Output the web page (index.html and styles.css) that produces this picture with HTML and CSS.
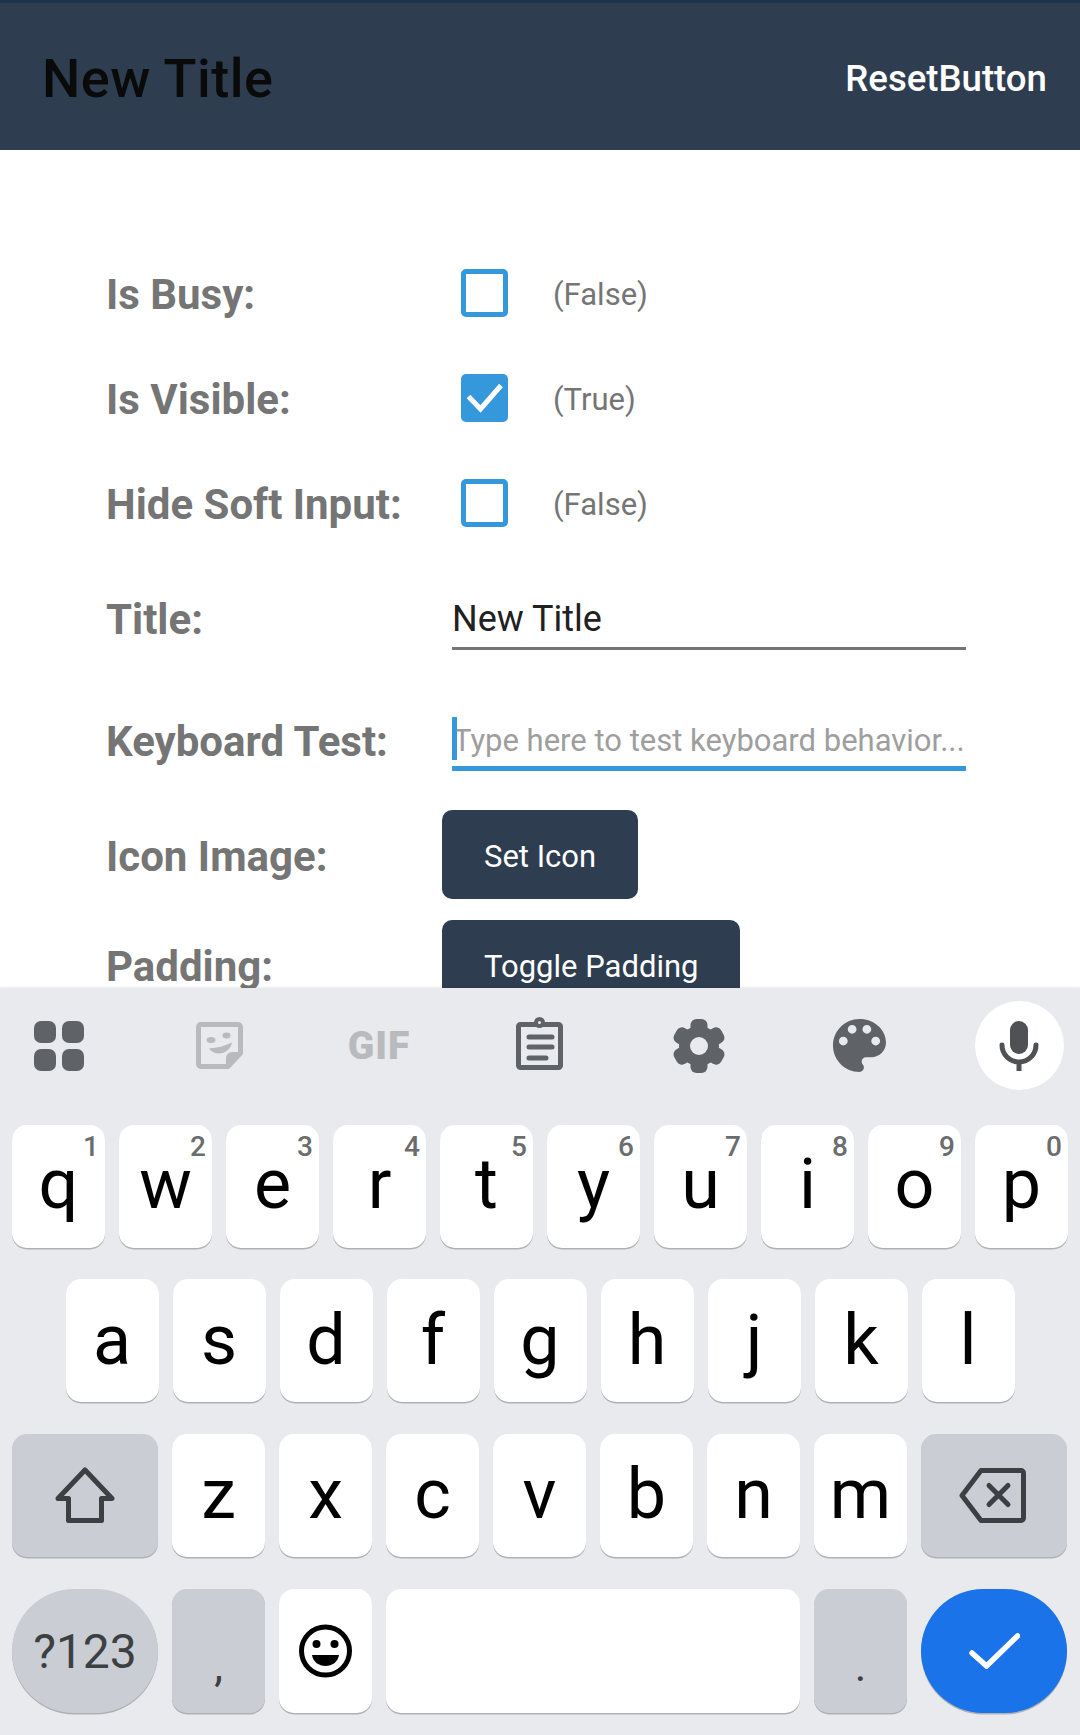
FILE: index.html
```html
<!DOCTYPE html>
<html lang="en">
<head>
<meta charset="utf-8">
<title>New Title</title>
<link rel="stylesheet" href="styles.css">
</head>
<body>
<div class="screen">
  <header class="header">
    <div class="header-title">New Title</div>
    <div class="header-action">ResetButton</div>
  </header>
  <main class="form">
    <div class="row row-check">
      <div class="label">Is Busy:</div>
      <div class="check"></div>
      <div class="value">(False)</div>
    </div>
    <div class="row row-check">
      <div class="label">Is Visible:</div>
      <div class="check check-on"><svg width="47" height="48" viewBox="0 0 47 48"><path d="M7.5 22.5L19.5 35L40 11.5" fill="none" stroke="#fff" stroke-width="5"/></svg></div>
      <div class="value">(True)</div>
    </div>
    <div class="row row-check">
      <div class="label">Hide Soft Input:</div>
      <div class="check"></div>
      <div class="value">(False)</div>
    </div>
    <div class="row row-title">
      <div class="label">Title:</div>
      <div class="field field-title">New Title</div>
    </div>
    <div class="row row-keyboard">
      <div class="label">Keyboard Test:</div>
      <div class="field field-focus"><span class="caret"></span>Type here to test keyboard behavior...</div>
    </div>
    <div class="row row-button row-icon">
      <div class="label label-low">Icon Image:</div>
      <div class="button">Set Icon</div>
    </div>
    <div class="row row-button row-padding">
      <div class="label label-low">Padding:</div>
      <div class="button">Toggle Padding</div>
    </div>
  </main>
  <section class="keyboard">
    <div class="toolbar">
      <div class="tool"><svg width="50" height="50" viewBox="0 0 50 50" fill="#5f6368"><rect x="0" y="0" width="22" height="22" rx="7"/><rect x="28" y="0" width="22" height="22" rx="7"/><rect x="0" y="28" width="22" height="22" rx="7"/><rect x="28" y="28" width="22" height="22" rx="7"/></svg></div>
      <div class="tool"><svg class="icon-sticker" width="47" height="48" viewBox="0 0 47 48"><path d="M2.5 5a2.500 2.500 0 0 1 2.500-2.500H42a2.500 2.500 0 0 1 2.500 2.500V31L32 44.500H5a2.500 2.500 0 0 1-2.500-2.500Z" fill="none" stroke="#b9babd" stroke-width="5" stroke-linejoin="round"/><path d="M46 30H36a6 6 0 0 0-6 6V46Z" fill="#b9babd"/><ellipse cx="15" cy="18" rx="4.500" ry="3" fill="#b9babd"/><ellipse cx="30.500" cy="13.500" rx="4" ry="3" fill="#b9babd"/><path d="M13 26.500C21 26 29 24 36 20.500C35 27 29 31.500 23 31.500C19 31.500 15.500 30 13 26.500Z" fill="#b9babd"/></svg></div>
      <div class="tool tool-gif">GIF</div>
      <div class="tool"><svg class="icon-clipboard" width="47" height="53" viewBox="0 0 47 53" fill="none" stroke="#5f6368" stroke-width="5" stroke-linecap="round"><rect x="2.500" y="7.500" width="42" height="43" rx="2"/><path d="M13 20H36M13 30H36M13 41H30"/><circle cx="23.500" cy="5.500" r="3.500" fill="#e8eaed" stroke-width="4"/></svg></div>
      <div class="tool"><svg width="52" height="54" viewBox="0 0 52 54" fill="#5f6368"><g transform="translate(26 27)"><circle r="20"/><rect x="-8.500" y="-27" width="17" height="54" rx="6"/><rect x="-8.500" y="-27" width="17" height="54" rx="6" transform="rotate(60)"/><rect x="-8.500" y="-27" width="17" height="54" rx="6" transform="rotate(120)"/><circle r="9" fill="#e8eaed"/></g></svg></div>
      <div class="tool"><svg width="53" height="53" viewBox="3 3 18 18" fill="#5f6368"><path d="M12 3c-4.970 0-9 4.030-9 9s4.030 9 9 9c.830 0 1.500-.670 1.500-1.500 0-.390-.150-.740-.390-1.010-.230-.260-.380-.610-.380-.990 0-.830.670-1.500 1.500-1.500H16c2.760 0 5-2.240 5-5 0-4.420-4.030-8-9-8zm-5.500 9c-.830 0-1.500-.670-1.500-1.500S5.670 9 6.500 9 8 9.670 8 10.500 7.330 12 6.500 12zm3-4C8.670 8 8 7.330 8 6.500S8.670 5 9.500 5s1.500.670 1.500 1.500S10.330 8 9.500 8zm5 0c-.830 0-1.500-.670-1.500-1.500S13.670 5 14.500 5s1.500.670 1.500 1.500S15.330 8 14.500 8zm3 4c-.830 0-1.500-.670-1.500-1.500S16.670 9 17.500 9s1.500.670 1.500 1.500-.670 1.500-1.500 1.500z"/></svg></div>
      <div class="tool tool-mic"><svg width="40" height="50" viewBox="0 0 40 50"><rect x="11" y="0" width="18" height="33" rx="9" fill="#4f5154"/><path d="M3 24a17 17 0 0 0 34 0M20 41V50" fill="none" stroke="#4f5154" stroke-width="5" stroke-linecap="round"/></svg></div>
    </div>
    <div class="keys">
      <div class="key-row key-row-top">
        <div class="key">q<span class="hint">1</span></div>
        <div class="key">w<span class="hint">2</span></div>
        <div class="key">e<span class="hint">3</span></div>
        <div class="key">r<span class="hint">4</span></div>
        <div class="key">t<span class="hint">5</span></div>
        <div class="key">y<span class="hint">6</span></div>
        <div class="key">u<span class="hint">7</span></div>
        <div class="key">i<span class="hint">8</span></div>
        <div class="key">o<span class="hint">9</span></div>
        <div class="key">p<span class="hint">0</span></div>
      </div>
      <div class="key-row key-row-home">
        <div class="key">a</div>
        <div class="key">s</div>
        <div class="key">d</div>
        <div class="key">f</div>
        <div class="key">g</div>
        <div class="key">h</div>
        <div class="key">j</div>
        <div class="key">k</div>
        <div class="key">l</div>
      </div>
      <div class="key-row">
        <div class="key key-wide key-mod"><svg width="60" height="56" viewBox="0 0 60 56"><path d="M30 3L57 31.500H46.500V53.500H13.500V31.500H3Z" fill="none" stroke="#3c4043" stroke-width="5" stroke-linejoin="round"/></svg></div>
        <div class="key">z</div>
        <div class="key">x</div>
        <div class="key">c</div>
        <div class="key">v</div>
        <div class="key">b</div>
        <div class="key">n</div>
        <div class="key">m</div>
        <div class="key key-wide key-mod key-delete"><svg width="67" height="55" viewBox="0 0 67 55" fill="none" stroke="#3c4043" stroke-width="5" stroke-linejoin="round" stroke-linecap="round"><path d="M22 2.500H62a2.500 2.500 0 0 1 2.500 2.500V50a2.500 2.500 0 0 1-2.500 2.500H22L3 27.500Z"/><path d="M30 17.500L49 36.500M49 17.500L30 36.500"/></svg></div>
      </div>
      <div class="key-row key-row-bottom">
        <div class="key key-wide key-mod key-pill key-symbols">?123</div>
        <div class="key key-mod key-punct">,</div>
        <div class="key key-icon"><svg width="53" height="54" viewBox="0 0 53 54"><circle cx="26.500" cy="27" r="24" fill="none" stroke="#000" stroke-width="5"/><circle cx="17.500" cy="20" r="4"/><circle cx="35.500" cy="20" r="4"/><path d="M13 31H40C39 38 33 42 26.500 42C20 42 14 38 13 31Z"/></svg></div>
        <div class="key key-space"></div>
        <div class="key key-mod key-punct">.</div>
        <div class="key key-wide key-pill key-enter"><svg width="51" height="36" viewBox="0 0 51 36"><path d="M3 20L17.500 33L48.500 3" fill="none" stroke="#fff" stroke-width="5.500" stroke-linecap="round"/></svg></div>
      </div>
    </div>
  </section>
</div>
</body>
</html>
```
FILE: styles.css
```css
* { box-sizing: border-box; }
html, body { margin: 0; padding: 0; }
body { font-family: Roboto, "Liberation Sans", sans-serif; background: #fff; }
.screen { width: 1080px; height: 1735px; display: flex; flex-direction: column; overflow: hidden; }

.header { flex: 0 0 150px; background: #2e3e50; border-top: 3px solid #1d3349; display: flex; align-items: center; justify-content: space-between; padding: 4px 33px 0 42px; }
.header-title { font-size: 54px; font-weight: 500; color: #0a0a0a; line-height: 60px; letter-spacing: 0.5px; }
.header-action { font-size: 36.6px; font-weight: 500; color: #fff; line-height: 44px; }

.form { flex: 1 1 0; min-height: 0; overflow: hidden; padding: 90.5px 0 0 106px; }
.row { display: flex; align-items: center; }
.row-check { height: 105px; }
.label { flex: 0 0 336px; font-size: 42px; font-weight: 700; color: #757575; line-height: 50px; white-space: nowrap; }
.row-check .label { margin-top: 4px; }
.row-keyboard .label { margin-top: 2px; }
.label-low { margin-top: 5px; }
.check { width: 47px; height: 48px; border: 5px solid #3498db; border-radius: 5px; margin: 0 0 0 19px; flex: none; }
.check-on { background: #3498db; border: 0; }
.check-on svg { display: block; }
.value { margin: 4px 0 0 45px; font-size: 31px; color: #757575; line-height: 40px; }

.row-title { height: 60px; margin-top: 34px; }
.field { position: relative; width: 514px; margin-left: 10px; display: flex; align-items: flex-end; white-space: nowrap; }
.field-title { height: 60px; border-bottom: 3px solid #757575; padding: 0 0 7px; font-size: 36px; line-height: 42px; color: #212121; }
.row-keyboard { height: 59px; margin-top: 62px; }
.field-focus { height: 59px; border-bottom: 5px solid #3498db; padding: 0 0 5px 1px; font-size: 31px; line-height: 40px; color: #9e9e9e; }
.caret { position: absolute; left: 0; top: 5px; width: 5px; height: 43px; background: #3498db; }

.row-button { height: 89px; flex: none; }
.row-icon { margin-top: 39px; }
.row-padding { margin-top: 21px; }
.button { height: 89px; padding: 5px 42px 0; border-radius: 10px; background: #2e3e50; color: #fff; font-size: 31px; line-height: 40px; display: flex; align-items: center; }

.keyboard { flex: 0 0 747px; background: #e8eaed; box-shadow: 0 -1px 2px rgba(0,0,0,.08); position: relative; padding-top: 13px; }
.toolbar { height: 89px; display: flex; gap: 71px; padding-left: 14.5px; }
.tool { flex: 0 0 89px; height: 89px; display: flex; align-items: center; justify-content: center; }
.tool-gif { font-size: 39px; font-weight: 900; color: #b9babd; letter-spacing: 1px; }
.tool-mic { background: #fff; border-radius: 50%; }
.icon-clipboard { margin-bottom: 4px; }
.keys { padding: 35px 12px 0; display: flex; flex-direction: column; gap: 31.49px; }
.key-row { display: flex; gap: 14px; height: 123px; }
.key-row-home { padding-left: 53.5px; }
.key-row-bottom { margin-top: 0.6px; height: 124px; }
.key { position: relative; flex: 0 0 93px; height: 123px; padding-bottom: 2px; background: #fff; border-radius: 15px; box-shadow: 0 1.5px 0 #b0b1b4; display: flex; align-items: center; justify-content: center; font-size: 70px; line-height: 80px; color: #000; }
.key-row-bottom .key { height: 124px; }
.key-row-top .key { padding-bottom: 5px; }
.hint { position: absolute; right: 6px; top: 6px; font-size: 28px; font-weight: 500; line-height: 32px; color: #6b6c6e; }
.key-wide { flex-basis: 146px; padding-bottom: 0; }
.key-delete { padding-right: 4px; }
.key-icon { padding-bottom: 0; }
.key-mod { background: #cacdd4; }
.key-pill { border-radius: 62px; }
.key-symbols { font-size: 48px; line-height: 56px; color: #3c4043; padding-top: 2px; }
.key-punct { font-size: 44px; line-height: 50px; color: #3c4043; align-items: flex-end; padding-bottom: 22px; }
.key-space { flex-basis: 414px; }
.key-enter { background: #1a73e8; }
```
